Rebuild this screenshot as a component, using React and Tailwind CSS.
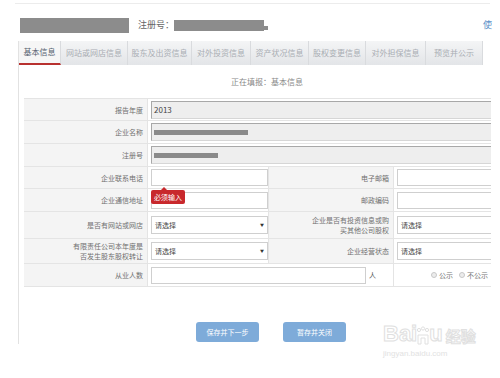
const tabs = [
  { name: '基本信息', w: 'w-[42px]', active: true },
  { name: '网站或网店信息', w: 'w-[67px]' },
  { name: '股东及出资信息', w: 'w-[64px]' },
  { name: '对外投资信息', w: 'w-[59px]' },
  { name: '资产状况信息', w: 'w-[58px]' },
  { name: '股权变更信息', w: 'w-[57px]' },
  { name: '对外担保信息', w: 'w-[60px]' },
  { name: '预览并公示', w: 'w-[57px]' },
];

const Label = ({ children, className = '' }) => (
  <div className={`flex items-center justify-end bg-[#f4f4f4] border-b border-r border-[#e4e4e4] pr-[4px] text-right text-[7px] leading-[10px] text-[#707070] ${className}`}>
    {children}
  </div>
);

const Cell = ({ children, className = '' }) => (
  <div className={`flex items-center bg-white border-b border-r border-[#e4e4e4] pl-[3px] ${className}`}>
    {children}
  </div>
);

// boxes in the last column run off the cropped edge: no right border
const TextBox = ({ className = 'w-[117px]' }) => (
  <div className={`h-[17px] shrink-0 border border-[#cfcfcf] bg-white ${className}`}></div>
);

const Select = ({ className = 'w-[117px]', arrow = true }) => (
  <div className={`flex h-[18px] shrink-0 items-center justify-between border border-[#cfcfcf] bg-white px-[3px] text-[7px] text-[#444] ${className}`}>
    <span>请选择</span>
    {arrow && <span className="text-[4px] text-[#333]">▼</span>}
  </div>
);

const ReadOnly = ({ children }) => (
  <div className="flex h-[18px] w-[345px] shrink-0 items-center border border-r-0 border-[#d6d6d6] border-t-[#a8a8a8] border-l-[#a8a8a8] bg-[#eeeeee] px-[2px] text-[8px] text-[#444]">
    {children}
  </div>
);

const Radio = ({ label }) => (
  <span className="flex items-center gap-[2px]">
    <span className="h-[6px] w-[6px] rounded-full border border-[#c8c8c8] bg-[#ececec]"></span>
    {label}
  </span>
);

export default function App() {
  return (
    <div className="relative h-[378px] w-[500px] overflow-hidden bg-white font-['Noto_Sans_CJK_SC','Noto_Sans',sans-serif]">
      {/* top rule */}
      <div className="ml-[15px] mt-[3px] h-px w-[475px] bg-[#ececec]"></div>

      {/* header */}
      <div className="mt-[13px] flex h-[16px] items-center">
        <div className="ml-[20px] h-[15px] w-[109px] bg-[#8c8c8c]"></div>
        <span className="ml-[9px] text-[9px] text-[#666]">注册号：</span>
        <div className="flex items-end">
          <div className="h-[11px] w-[90px] bg-[#8c8c8c]"></div>
          <div className="mb-[1px] h-[4px] w-[4px] bg-[#8c8c8c]"></div>
        </div>
        <span className="ml-auto mr-[8px] text-[9px] text-[#5b8fc8]">使</span>
      </div>

      <div className="ml-[18px] mt-[8px] h-[303px] w-[482px] border-l border-[#e2e2e2]">
        {/* tabs */}
        <div className="flex h-[24px] w-[464px] bg-gradient-to-b from-[#f4f5f6] to-[#e3e5e8]">
          {tabs.map((t) => (
            <div
              key={t.name}
              className={`flex items-center justify-center border-r border-[#d9dbde] text-[8px] ${t.w} ${
                t.active ? 'border-b-2 border-b-[#b8312f] bg-[#f6f6f6] text-[#55606e]' : 'text-[#a9adb3]'
              }`}
            >
              {t.name}
            </div>
          ))}
        </div>

        <div className="flex h-[33px] items-center pl-[212px] text-[8px] text-[#888]">正在填报：基本信息</div>

        {/* form table */}
        <div className="relative ml-[5px] w-[467px] overflow-hidden border-t border-[#e4e4e4]">
          <div className="grid grid-cols-[124px_121px_125px_97px]">
            <Label className="h-[22px]">报告年度</Label>
            <Cell className="col-span-3 h-[22px] border-r-0">
              <ReadOnly>2013</ReadOnly>
            </Cell>

            <Label className="h-[23px]">企业名称</Label>
            <Cell className="col-span-3 h-[23px] border-r-0">
              <ReadOnly>
                <div className="h-[5px] w-[94px] bg-[#8a8a8a]"></div>
              </ReadOnly>
            </Cell>

            <Label className="h-[23px]">注册号</Label>
            <Cell className="col-span-3 h-[23px] border-r-0">
              <ReadOnly>
                <div className="h-[5px] w-[64px] bg-[#8a8a8a]"></div>
              </ReadOnly>
            </Cell>

            <Label className="h-[22px]">企业联系电话</Label>
            <Cell className="h-[22px]">
              <TextBox />
            </Cell>
            <Label className="h-[22px]">电子邮箱</Label>
            <Cell className="h-[22px] border-r-0">
              <TextBox className="w-[94px] border-r-0" />
            </Cell>

            <Label className="h-[23px]">企业通信地址</Label>
            <Cell className="h-[23px]">
              <TextBox />
            </Cell>
            <Label className="h-[23px]">邮政编码</Label>
            <Cell className="h-[23px] border-r-0">
              <TextBox className="w-[94px] border-r-0" />
            </Cell>

            <Label className="h-[27px]">是否有网站或网店</Label>
            <Cell className="h-[27px]">
              <Select />
            </Cell>
            <Label className="h-[27px]">
              企业是否有投资信息或购
              <br />
              买其他公司股权
            </Label>
            <Cell className="h-[27px] border-r-0">
              <Select className="w-[94px] border-r-0" arrow={false} />
            </Cell>

            <Label className="h-[25px]">
              有限责任公司本年度是
              <br />
              否发生股东股权转让
            </Label>
            <Cell className="h-[25px]">
              <Select />
            </Cell>
            <Label className="h-[25px]">企业经营状态</Label>
            <Cell className="h-[25px] border-r-0">
              <Select className="w-[94px] border-r-0" arrow={false} />
            </Cell>

            <Label className="h-[23px]">从业人数</Label>
            <Cell className="col-span-2 h-[23px] gap-[3px] text-[7px] text-[#555]">
              <TextBox className="w-[215px]" />
              <span>人</span>
            </Cell>
            <Cell className="h-[23px] justify-end gap-[6px] border-r-0 pr-[3px] text-[7px] text-[#777]">
              <Radio label="公示" />
              <Radio label="不公示" />
            </Cell>
          </div>

          {/* validation tooltip */}
          <div className="absolute left-[127px] top-[91px] flex h-[14px] items-center rounded-[2px] bg-[#c8282c] px-[3px] text-[7px] text-white">
            <span className="absolute -top-[3px] left-[10px] h-0 w-0 border-x-[3px] border-b-[3px] border-x-transparent border-b-[#c8282c]"></span>
            必须输入
          </div>
        </div>

        {/* buttons */}
        <div className="mt-[35px] flex gap-[24px] pl-[177px]">
          <div className="flex h-[20px] w-[63px] items-center justify-center rounded-[3px] bg-[#7eabd9] text-[7px] text-white">保存并下一步</div>
          <div className="flex h-[20px] w-[63px] items-center justify-center rounded-[3px] bg-[#7eabd9] text-[7px] text-white">暂存并关闭</div>
        </div>
      </div>

      {/* watermark */}
      <div className="absolute left-[383px] top-[322px] flex flex-col items-start">
        <div className="flex items-end">
          <span className="font-['Liberation_Sans',sans-serif] text-[22px] font-bold leading-[24px] text-transparent [-webkit-text-stroke:1px_#e0e0e0]">Bai</span>
          <svg width="14" height="20" viewBox="0 0 14 20" className="-mx-[1px]">
            <circle cx="3" cy="4" r="1.6" fill="none" stroke="#e0e0e0" />
            <circle cx="7" cy="2.5" r="1.6" fill="none" stroke="#e0e0e0" />
            <circle cx="11" cy="4" r="1.6" fill="none" stroke="#e0e0e0" />
            <path d="M2 18 V9 H12 V18 H9 V12 H5 V18 Z" fill="none" stroke="#e0e0e0" />
          </svg>
          <span className="font-['Liberation_Sans',sans-serif] text-[22px] font-bold leading-[24px] text-transparent [-webkit-text-stroke:1px_#e0e0e0]">u</span>
          <span className="ml-[3px] text-[15px] font-bold leading-[20px] text-transparent [-webkit-text-stroke:1px_#e0e0e0]">经验</span>
        </div>
        <span className="mt-[2px] font-['Liberation_Sans',sans-serif] text-[8px] text-[#e2e2e2]">jingyan.baidu.com</span>
      </div>
    </div>
  );
}
